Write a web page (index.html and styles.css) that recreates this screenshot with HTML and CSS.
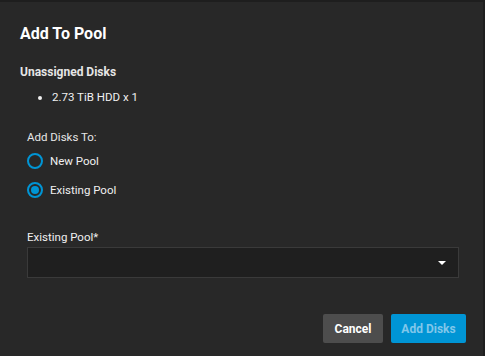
FILE: index.html
```html
<!DOCTYPE html>
<html>
<head>
<meta charset="utf-8">
<link rel="stylesheet" href="styles.css">
</head>
<body>
<div class="dialog">
  <h1 class="title">Add To Pool</h1>
  <h2 class="subtitle">Unassigned Disks</h2>
  <ul class="disks">
    <li>2.73 TiB HDD x 1</li>
  </ul>
  <div class="group">
    <div class="group-label">Add Disks To:</div>
    <label class="radio"><span class="circle"></span><span>New Pool</span></label>
    <label class="radio"><span class="circle checked"></span><span>Existing Pool</span></label>
  </div>
  <div class="field">
    <div class="field-label">Existing Pool*</div>
    <div class="select"><span class="arrow"></span></div>
  </div>
  <div class="actions">
    <button class="btn cancel">Cancel</button>
    <button class="btn primary">Add Disks</button>
  </div>
</div>
</body>
</html>
```
FILE: styles.css
```css
html, body {
  margin: 0;
  padding: 0;
  background: #1e1e1e;
}
body {
  width: 485px;
  height: 356px;
  font-family: Roboto, "Noto Sans", sans-serif;
  color: #ffffff;
}
.dialog {
  box-sizing: border-box;
  width: 483px;
  height: 354px;
  margin-top: 2px;
  background: #282828;
  padding: 22px 17px 0 20px;
  display: flex;
  flex-direction: column;
}
.title {
  margin: 0;
  font-size: 16px;
  font-weight: 700;
  line-height: 20px;
}
.subtitle {
  margin: 18px 0 0 0;
  font-size: 12px;
  font-weight: 700;
  line-height: 20px;
  color: #e6e6e6;
}
.disks {
  margin: 7px 0 0 0;
  padding-left: 32px;
  font-size: 11.5px;
  line-height: 16px;
  color: #f0f0f0;
}
.group {
  margin-top: 24px;
  padding-left: 7px;
  display: flex;
  flex-direction: column;
}
.group-label {
  font-size: 11.5px;
  line-height: 16px;
  color: #e6e6e6;
}
.radio {
  display: flex;
  align-items: center;
  gap: 7px;
  font-size: 11.5px;
  line-height: 16px;
  color: #f0f0f0;
  margin-top: 4px;
  height: 23px;
}
.radio + .radio {
  margin-top: 6px;
}
.circle {
  box-sizing: border-box;
  width: 16px;
  height: 16px;
  border: 2px solid #0095d5;
  border-radius: 50%;
  position: relative;
}
.circle.checked::after {
  content: "";
  position: absolute;
  left: 2px;
  top: 2px;
  width: 8px;
  height: 8px;
  border-radius: 50%;
  background: #0095d5;
}
.field {
  margin-top: 28px;
  padding-left: 7px;
}
.field-label {
  font-size: 11.5px;
  line-height: 16px;
  color: #f0f0f0;
}
.select {
  box-sizing: border-box;
  margin-top: 2px;
  height: 31px;
  width: 432px;
  background: #1f1f1f;
  border: 1px solid #3a3a3a;
  display: flex;
  align-items: center;
  justify-content: flex-end;
  padding-right: 12px;
}
.arrow {
  width: 0;
  height: 0;
  border-left: 4px solid transparent;
  border-right: 4px solid transparent;
  border-top: 4px solid #ffffff;
}
.actions {
  margin-top: 36px;
  display: flex;
  justify-content: flex-end;
  gap: 8px;
}
.btn {
  font-family: Roboto, "Noto Sans", sans-serif;
  font-size: 12px;
  font-weight: 700;
  height: 29px;
  border: none;
  border-radius: 2px;
  padding: 0;
}
.cancel {
  width: 60px;
  background: #4d4d4d;
  color: #ffffff;
}
.primary {
  width: 75px;
  background: #0095d5;
  color: #80c7ea;
}
```
